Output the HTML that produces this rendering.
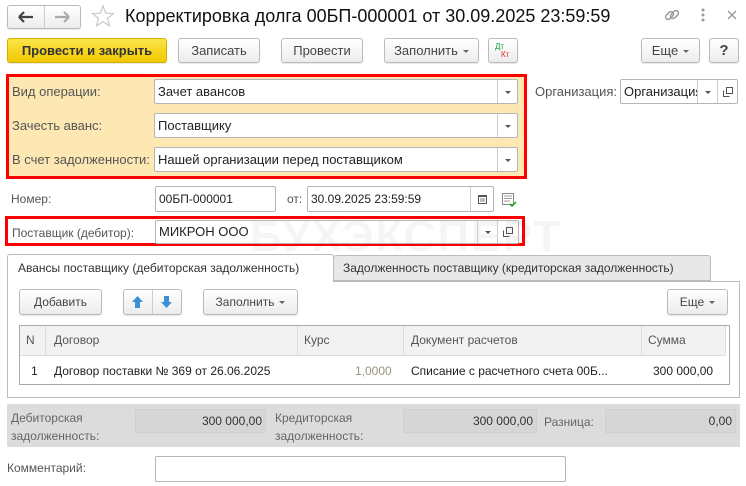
<!DOCTYPE html><html><head><meta charset="utf-8"><style>
*{box-sizing:border-box;margin:0;padding:0}
body{width:746px;height:486px;background:#fff;font-family:"Liberation Sans",sans-serif;font-size:13px;color:#333;position:relative;overflow:hidden}
.a{position:absolute}
.btn{position:absolute;border:1px solid #bbb;border-radius:3px;background:linear-gradient(#fff,#ececec);text-align:center;color:#444;font-size:13px;box-shadow:0 1px 1px rgba(0,0,0,.1)}
.fld{position:absolute;border:1px solid #b5b5b5;border-radius:2px;background:#fff;color:#222;padding-left:3px;white-space:nowrap;overflow:hidden}
.dd{position:absolute;top:0;bottom:0;border-left:1px solid #ccc;width:20px}
.dd:after{content:"";position:absolute;left:7px;top:50%;margin-top:-1px;border:3px solid transparent;border-top:3px solid #555}
.lbl{position:absolute;color:#555;white-space:nowrap}
.tri{display:inline-block;border:3px solid transparent;border-top:3px solid #666;margin-left:5px;vertical-align:middle;margin-top:3px}
</style></head><body>
<div class="btn" style="left:7px;top:5px;width:74px;height:24px"></div>
<div class="a" style="left:44px;top:6px;width:1px;height:22px;background:#ccc"></div>
<svg class="a" style="left:18px;top:10px" width="16" height="14"><path d="M1 7H15M1 7L6 2M1 7L6 12" stroke="#444" stroke-width="2.2" fill="none"/></svg>
<svg class="a" style="left:54px;top:10px" width="16" height="14"><path d="M1 7H15M15 7L10 2M15 7L10 12" stroke="#aaa" stroke-width="2.2" fill="none"/></svg>
<svg class="a" style="left:91px;top:4px" width="24" height="24"><path d="M12 2L14.8 9.2 22.5 9.6 16.5 14.4 18.5 21.9 12 17.6 5.5 21.9 7.5 14.4 1.5 9.6 9.2 9.2Z" stroke="#c8c8c8" stroke-width="1.2" fill="none"/></svg>
<div class="a" style="left:125px;top:6px;font-size:18px;color:#111;white-space:nowrap">Корректировка долга 00БП-000001 от 30.09.2025 23:59:59</div>
<svg class="a" style="left:664px;top:7px" width="16" height="16"><g stroke="#999" stroke-width="1.5" fill="none"><rect x="1" y="6" width="9" height="5" rx="2.5" transform="rotate(-45 5.5 8.5)"/><rect x="6" y="5" width="9" height="5" rx="2.5" transform="rotate(-45 10.5 7.5)"/></g></svg>
<svg class="a" style="left:700px;top:7px" width="6" height="16"><g fill="#999"><circle cx="3" cy="3" r="1.5"/><circle cx="3" cy="8" r="1.5"/><circle cx="3" cy="13" r="1.5"/></g></svg>
<svg class="a" style="left:727px;top:10px" width="10" height="10"><path d="M1 1L9 9M9 1L1 9" stroke="#999" stroke-width="1.3"/></svg>

<div class="btn" style="left:7px;top:38px;width:160px;height:25px;line-height:23px;background:linear-gradient(#fbe54a,#f2c800);border-color:#d6b000;color:#333;font-weight:bold">Провести и закрыть</div>
<div class="btn" style="left:178px;top:38px;width:82px;height:25px;line-height:23px">Записать</div>
<div class="btn" style="left:281px;top:38px;width:82px;height:25px;line-height:23px">Провести</div>
<div class="btn" style="left:384px;top:38px;width:95px;height:25px;line-height:23px">Заполнить<span class="tri"></span></div>
<div class="btn" style="left:488px;top:38px;width:30px;height:25px"><span class="a" style="left:6px;top:3px;font-size:8px;color:#1a9a3a">Дт</span><span class="a" style="left:12px;top:11px;font-size:8px;color:#e03030">Кт</span></div>
<div class="btn" style="left:641px;top:38px;width:59px;height:25px;line-height:23px">Еще<span class="tri"></span></div>
<div class="btn" style="left:709px;top:38px;width:30px;height:25px;line-height:23px;font-weight:bold;font-size:15px">?</div>

<div class="a" style="left:6px;top:74px;width:521px;height:105px;border:3px solid #f00;background:#fde8b4"></div>
<div class="lbl" style="left:12px;top:84px">Вид операции:</div>
<div class="lbl" style="left:12px;top:118px">Зачесть аванс:</div>
<div class="lbl" style="left:12px;top:152px">В счет задолженности:</div>
<div class="fld" style="left:154px;top:79px;width:364px;height:25px;line-height:23px">Зачет авансов<div class="dd" style="right:0"></div></div>
<div class="fld" style="left:154px;top:113px;width:364px;height:25px;line-height:23px">Поставщику<div class="dd" style="right:0"></div></div>
<div class="fld" style="left:154px;top:147px;width:364px;height:25px;line-height:23px">Нашей организации перед поставщиком<div class="dd" style="right:0"></div></div>

<div class="lbl" style="left:535px;top:84px">Организация:</div>
<div class="fld" style="left:620px;top:79px;width:118px;height:25px;line-height:23px">Организация<div class="dd" style="right:20px;background:#fff"></div><div class="a" style="right:0;top:0;bottom:0;width:20px;border-left:1px solid #ccc;background:#fff"><svg class="a" style="left:5px;top:7px" width="10" height="10"><path d="M3.5 .5H9.5V6.5H3.5ZM.5 3.5V9.5H6.5" stroke="#555" fill="none"/></svg></div></div>

<div class="lbl" style="left:11px;top:192px;font-size:12px">Номер:</div>
<div class="fld" style="left:155px;top:186px;width:121px;height:26px;line-height:24px;font-size:12px">00БП-000001</div>
<div class="lbl" style="left:287px;top:192px;font-size:12px">от:</div>
<div class="fld" style="left:307px;top:186px;width:187px;height:26px;line-height:24px;font-size:12px">30.09.2025 23:59:59<div class="a" style="right:0;top:0;bottom:0;width:23px;border-left:1px solid #ccc"><svg class="a" style="left:7px;top:7px" width="9" height="10"><rect x=".5" y="1.5" width="8" height="8" stroke="#555" fill="none"/><rect x="1" y="1" width="7" height="2" fill="#555"/><path d="M2 5h5M2 7h5" stroke="#777"/></svg></div></div>
<svg class="a" style="left:501px;top:192px" width="16" height="16"><path d="M1.5 1.5h11v11h-11z" stroke="#888" fill="#fff"/><path d="M3 4h8M3 6.5h8M3 9h6" stroke="#999"/><path d="M9 12l2 2 4-4" stroke="#2a2" stroke-width="1.6" fill="none"/></svg>

<div class="a" style="left:5px;top:216px;width:520px;height:30px;border:3px solid #f00"></div>
<div class="lbl" style="left:12px;top:226px;font-size:12px">Поставщик (дебитор):</div>
<div class="a" style="left:250px;top:212px;font-size:44px;font-weight:bold;color:rgba(0,0,0,.04);letter-spacing:2px">БУХЭКСПЕРТ</div>
<div class="fld" style="left:155px;top:220px;width:364px;height:24px;line-height:22px;background:transparent">МИКРОН ООО<div class="dd" style="right:21px"></div><div class="a" style="right:0;top:0;bottom:0;width:21px;border-left:1px solid #ccc"><svg class="a" style="left:5px;top:6px" width="10" height="10"><path d="M3.5 .5H9.5V6.5H3.5ZM.5 3.5V9.5H6.5" stroke="#555" fill="none"/></svg></div></div>

<div class="a" style="left:7px;top:281px;width:733px;height:117px;border:1px solid #bbb"></div>
<div class="a" style="left:7px;top:254px;width:327px;height:28px;border:1px solid #bbb;border-bottom:none;border-radius:3px 3px 0 0;background:#fff;padding:6px 0 0 10px;font-size:12px;color:#333">Авансы поставщику (дебиторская задолженность)</div>
<div class="a" style="left:333px;top:255px;width:378px;height:26px;border:1px solid #bbb;border-radius:3px 3px 0 0;background:#e8e8e8;padding:5px 0 0 9px;font-size:12px;color:#333">Задолженность поставщику (кредиторская задолженность)</div>

<div class="btn" style="left:19px;top:289px;width:83px;height:26px;line-height:24px;font-size:12px">Добавить</div>
<div class="btn" style="left:123px;top:289px;width:59px;height:26px"></div>
<div class="a" style="left:152px;top:290px;width:1px;height:24px;background:#ccc"></div>
<svg class="a" style="left:131px;top:295px" width="13" height="14"><path d="M6.5 1L12 7H9V13H4V7H1Z" fill="#3a8fd6"/></svg>
<svg class="a" style="left:160px;top:295px" width="13" height="14"><path d="M6.5 13L12 7H9V1H4V7H1Z" fill="#3a8fd6"/></svg>
<div class="btn" style="left:203px;top:289px;width:95px;height:26px;line-height:24px;font-size:12px">Заполнить<span class="tri"></span></div>
<div class="btn" style="left:667px;top:289px;width:61px;height:26px;line-height:24px;font-size:12px">Еще<span class="tri"></span></div>

<div class="a" style="left:19px;top:325px;width:711px;height:60px;border:1px solid #aaa"></div>
<div class="a" style="left:20px;top:326px;width:706px;height:30px;background:#f2f2f2;border-bottom:1px solid #ddd"></div>
<div class="a" style="left:45px;top:326px;width:1px;height:30px;background:#ddd"></div>
<div class="a" style="left:297px;top:326px;width:1px;height:30px;background:#ddd"></div>
<div class="a" style="left:403px;top:326px;width:1px;height:30px;background:#ddd"></div>
<div class="a" style="left:641px;top:326px;width:1px;height:30px;background:#ddd"></div>
<div class="a" style="left:725px;top:326px;width:1px;height:30px;background:#ddd"></div>
<div class="lbl" style="left:26px;top:333px;font-size:12px">N</div>
<div class="lbl" style="left:54px;top:333px;font-size:12px">Договор</div>
<div class="lbl" style="left:304px;top:333px;font-size:12px">Курс</div>
<div class="lbl" style="left:411px;top:333px;font-size:12px">Документ расчетов</div>
<div class="lbl" style="left:648px;top:333px;font-size:12px">Сумма</div>
<div class="a" style="left:31px;top:364px;font-size:12px;color:#222">1</div>
<div class="a" style="left:54px;top:364px;font-size:12px;color:#222">Договор поставки № 369 от 26.06.2025</div>
<div class="a" style="left:355px;top:364px;font-size:12px;color:#9a9280">1,0000</div>
<div class="a" style="left:411px;top:364px;font-size:12px;color:#222">Списание с расчетного счета 00Б...</div>
<div class="a" style="left:653px;top:364px;font-size:12px;color:#222">300 000,00</div>

<div class="a" style="left:7px;top:404px;width:733px;height:43px;background:#dcdcdc"></div>
<div class="lbl" style="left:11px;top:409px;font-size:12px;line-height:18px;color:#666">Дебиторская<br>задолженность:</div>
<div class="a" style="left:135px;top:409px;width:131px;height:24px;background:#d6d6d6;border:1px solid #d0d0d0;text-align:right;padding-right:3px;line-height:22px;font-size:12px;color:#333">300 000,00</div>
<div class="lbl" style="left:275px;top:409px;font-size:12px;line-height:18px;color:#666">Кредиторская<br>задолженность:</div>
<div class="a" style="left:403px;top:409px;width:134px;height:24px;background:#d6d6d6;border:1px solid #d0d0d0;text-align:right;padding-right:3px;line-height:22px;font-size:12px;color:#333">300 000,00</div>
<div class="lbl" style="left:544px;top:415px;font-size:12px;color:#666">Разница:</div>
<div class="a" style="left:605px;top:409px;width:131px;height:24px;background:#d6d6d6;border:1px solid #d0d0d0;text-align:right;padding-right:3px;line-height:22px;font-size:12px;color:#333">0,00</div>

<div class="lbl" style="left:7px;top:461px;font-size:12px">Комментарий:</div>
<div class="fld" style="left:155px;top:456px;width:411px;height:26px"></div>
</body></html>
